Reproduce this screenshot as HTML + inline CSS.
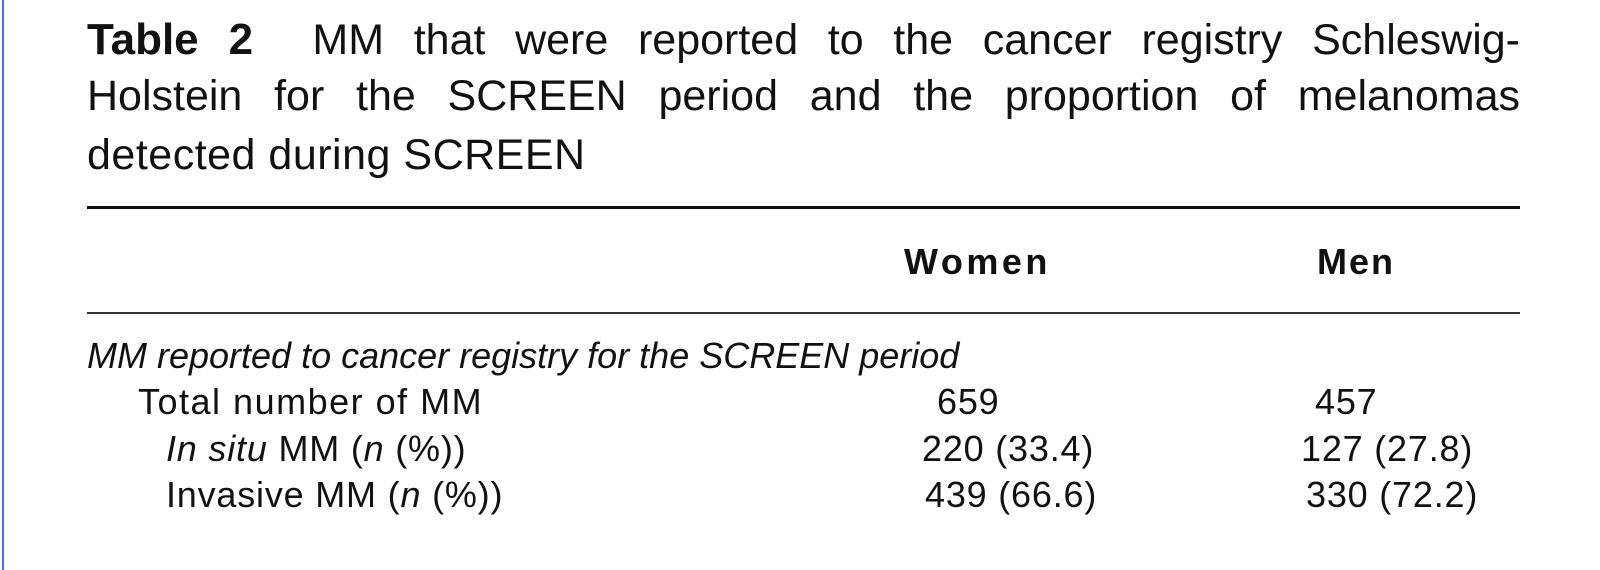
<!DOCTYPE html>
<html><head><meta charset="utf-8"><style>
html,body{margin:0;padding:0;background:#fff;}
body{width:1600px;height:570px;position:relative;overflow:hidden;font-family:"Liberation Sans",sans-serif;color:#111;}
.bl{position:absolute;left:2px;top:0;width:2px;height:570px;background:#3b7be8;}
.t{position:absolute;left:87px;width:1433px;font-size:43px;white-space:nowrap;}
.j{text-align:justify;text-align-last:justify;}
.r{position:absolute;left:87px;height:0;}
.c{position:absolute;font-size:36px;letter-spacing:0.8px;white-space:nowrap;}
</style></head><body>
<div class="bl"></div>
<div class="t j" style="top:15px"><b style="font-size:44px">Table 2</b> &nbsp;MM that were reported to the cancer registry Schleswig-</div>
<div class="t j" style="top:72px">Holstein for the SCREEN period and the proportion of melanomas</div>
<div class="t" style="top:131px;letter-spacing:0.5px">detected during SCREEN</div>
<div class="r" style="top:206px;width:1433px;border-top:3px solid #111"></div>
<div class="c" style="left:904px;top:241px;font-weight:bold;letter-spacing:3.5px">Women</div>
<div class="c" style="left:1317px;top:241px;font-weight:bold;letter-spacing:2px">Men</div>
<div class="r" style="top:312px;width:1433px;border-top:2px solid #333"></div>
<div class="c" style="left:87px;top:335px;font-style:italic;letter-spacing:0">MM reported to cancer registry for the SCREEN period</div>
<div class="c" style="left:138px;top:381px;letter-spacing:1.5px">Total number of MM</div>
<div class="c" style="left:166px;top:428px"><i>In situ</i> MM (<i>n</i> (%))</div>
<div class="c" style="left:166px;top:474px">Invasive MM (<i>n</i> (%))</div>
<div class="c" style="left:937px;top:381px">659</div>
<div class="c" style="left:922px;top:428px">220 (33.4)</div>
<div class="c" style="left:925px;top:474px">439 (66.6)</div>
<div class="c" style="left:1315px;top:381px">457</div>
<div class="c" style="left:1301px;top:428px">127 (27.8)</div>
<div class="c" style="left:1306px;top:474px">330 (72.2)</div>
</body></html>
